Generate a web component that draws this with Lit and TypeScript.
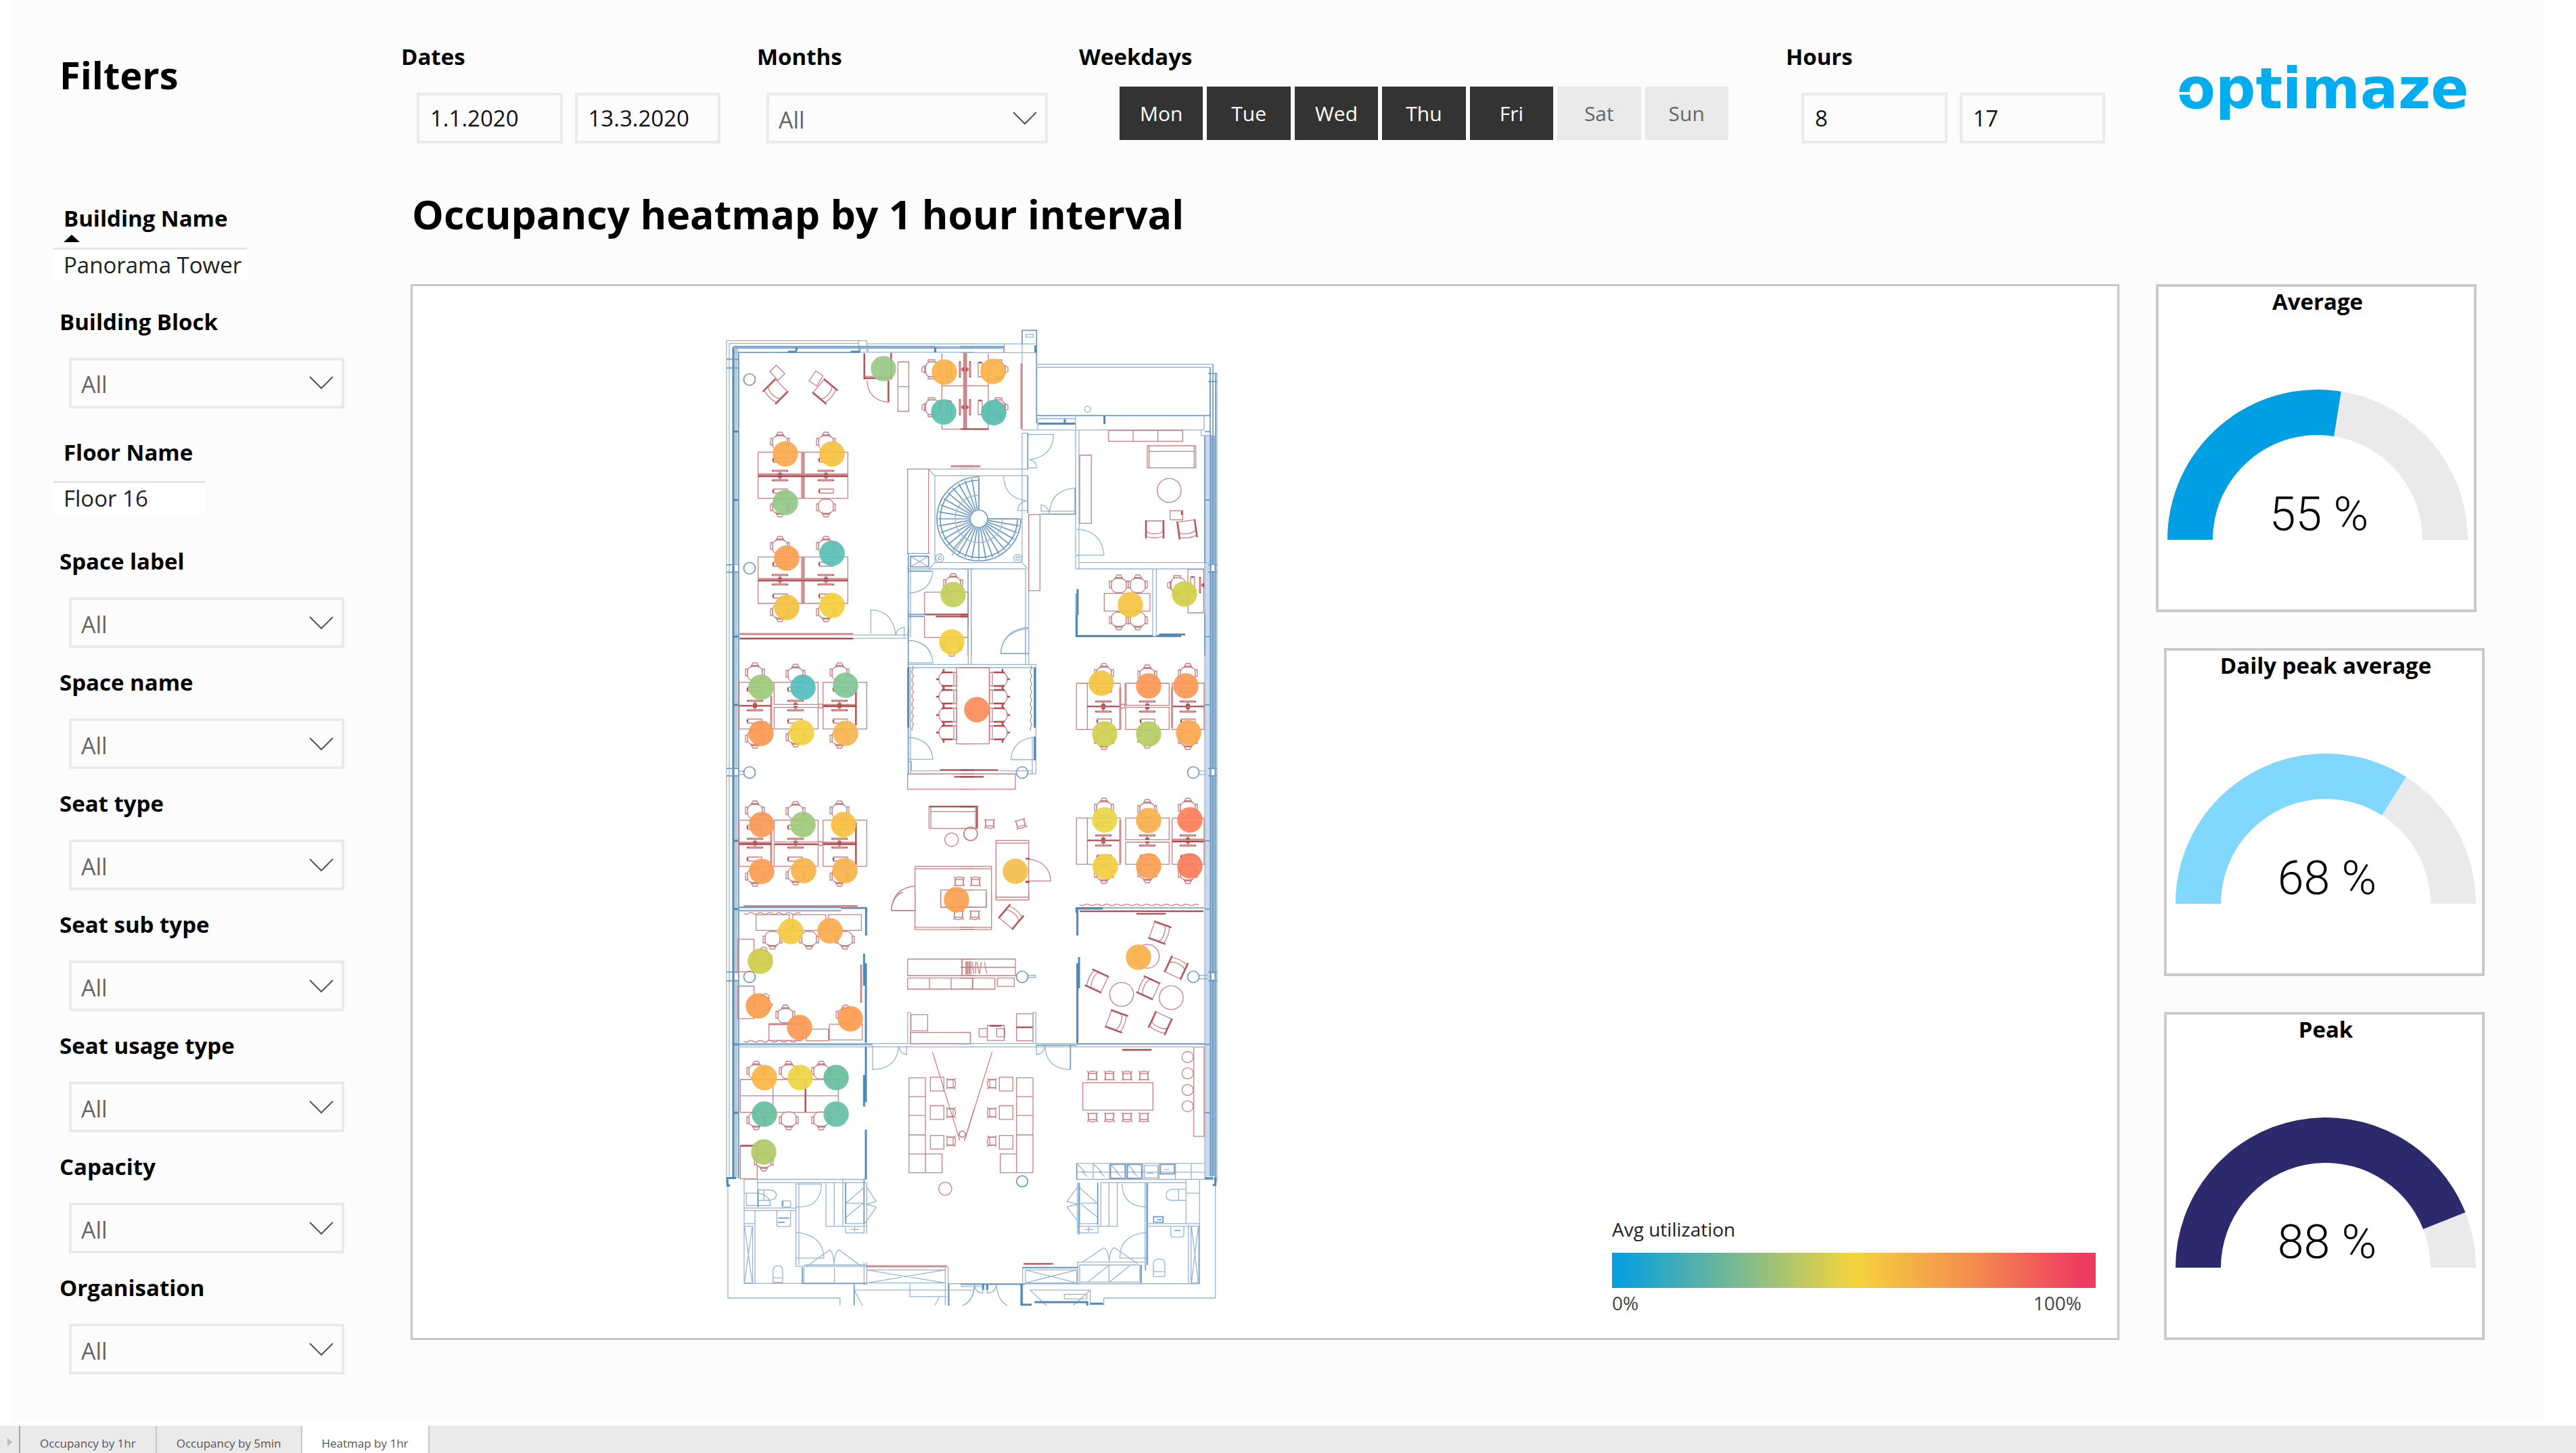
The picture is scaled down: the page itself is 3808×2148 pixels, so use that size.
import { LitElement, html, svg, css } from "lit";
import { customElement, property, state } from "lit/decorators.js";
import { classMap } from "lit/directives/class-map.js";

const sheet = css`
  * {
    box-sizing: border-box;
  }
  :host {
    font-family: "Open Sans", "Noto Sans", sans-serif;
    color: #000;
  }
`;

/* ---------- drop-down filter ---------- */

@customElement("filter-select")
export class FilterSelect extends LitElement {
  @property() label = "";

  static styles = [
    sheet,
    css`
      :host {
        display: block;
      }
      .label {
        display: block;
        font-size: 33px;
        line-height: 48px;
        font-weight: 700;
        margin-bottom: 29px;
      }
      .box {
        display: grid;
        margin-left: 14px;
        align-items: center;
      }
      .control,
      .chevron {
        grid-area: 1 / 1;
      }
      .control {
        appearance: none;
        width: 100%;
        height: 75px;
        border: 4px solid #eaeaea;
        border-radius: 0;
        background: #fcfcfc;
        color: #666;
        font: 400 34px "Open Sans", "Noto Sans", sans-serif;
        padding: 4px 56px 0 14px;
      }
      .chevron {
        justify-self: end;
        margin-right: 16px;
        width: 36px;
        height: 20px;
        pointer-events: none;
        fill: none;
        stroke: #555;
        stroke-width: 2;
      }
    `,
  ];

  render() {
    return html`
      <label class="label" for="field">${this.label}</label>
      <div class="box">
        <select class="control" id="field">
          <option>All</option>
        </select>
        <svg class="chevron" viewBox="0 0 36 20" aria-hidden="true"><path d="M1 1L18 18L35 1" /></svg>
      </div>
    `;
  }
}

/* ---------- gauge card ---------- */

@customElement("gauge-card")
export class GaugeCard extends LitElement {
  @property() label = "";
  @property({ type: Number }) value = 0;
  @property() color = "";

  static styles = [
    sheet,
    css`
      :host {
        display: flex;
        flex-direction: column;
        height: 485px;
        border: 4px solid #c8cacc;
        background: #fff;
        padding: 0 9px 0 13px;
      }
      .title {
        margin: 0 0 108px;
        font-size: 33px;
        line-height: 44px;
        font-weight: 700;
        text-align: center;
      }
      .dial {
        width: 100%;
        display: block;
      }
      .value {
        font-family: Roboto, sans-serif;
        font-weight: 300;
        font-size: 70px;
        text-anchor: middle;
      }
    `,
  ];

  private band(from: number, to: number) {
    const at = (r: number, f: number) => {
      const a = Math.PI * (1 - f);
      return `${(222 + r * Math.cos(a)).toFixed(2)} ${(222 - r * Math.sin(a)).toFixed(2)}`;
    };
    return `M${at(222, from)}A222 222 0 0 1 ${at(222, to)}L${at(155, to)}A155 155 0 0 0 ${at(155, from)}Z`;
  }

  render() {
    const f = this.value / 100;
    return html`
      <h2 class="title">${this.label}</h2>
      <svg class="dial" viewBox="0 0 444 224" role="img" aria-label=${`${this.label} ${this.value} %`}>
        <path d=${this.band(0, 1)} fill="#eaeaea" />
        <path d=${this.band(0, f)} fill=${this.color} />
        <text class="value" x="224" y="208">${this.value} %</text>
      </svg>
    `;
  }
}

/* ---------- floor plan ---------- */

type Spot = [number, number, string];
type Placed = [number, number, number];

const SPOTS: Spot[] = [
  [1306, 546, "#98c987"], [1396, 551, "#fbb248"], [1395, 610, "#5cbfae"],
  [1468, 550, "#fbb248"], [1469, 611, "#57bdae"],
  [1161, 672, "#fbaa4e"], [1230, 672, "#f6c23e"], [1161, 744, "#94c888"],
  [1163, 826, "#fca052"], [1230, 819, "#5abfb8"], [1163, 899, "#f5c240"], [1230, 896, "#f5d040"],
  [1409, 880, "#c3d05c"], [1407, 950, "#f4d040"], [1671, 895, "#f6c642"], [1751, 879, "#d1d048"],
  [1125, 1017, "#9dca7a"], [1187, 1017, "#52bec0"], [1250, 1014, "#80c795"],
  [1125, 1085, "#fb9953"], [1185, 1084, "#f4d140"], [1250, 1085, "#f9b64f"],
  [1126, 1220, "#fb9a54"], [1187, 1220, "#a1c97b"], [1247, 1220, "#f9be42"],
  [1126, 1289, "#fc9e54"], [1188, 1288, "#f9b44b"], [1249, 1288, "#f9b44b"],
  [1414, 1331, "#fba04f"], [1444, 1050, "#fc8c5e"], [1501, 1289, "#f5be48"],
  [1628, 1011, "#f4c542"], [1698, 1015, "#fc9957"], [1753, 1015, "#fc9957"],
  [1633, 1086, "#ced152"], [1698, 1086, "#b7cf66"], [1757, 1084, "#fba84d"],
  [1633, 1213, "#ebd646"], [1698, 1214, "#fab04d"], [1759, 1213, "#fd7f5d"],
  [1634, 1282, "#f3cf40"], [1698, 1281, "#fc9f52"], [1759, 1281, "#fd7b5c"],
  [1169, 1378, "#f5ca41"], [1227, 1377, "#fbaa4f"], [1124, 1422, "#cfcd4c"],
  [1121, 1488, "#fb9e50"], [1182, 1520, "#fc9a54"], [1257, 1507, "#fc9d50"],
  [1130, 1594, "#fbb646"], [1183, 1594, "#edd543"], [1236, 1594, "#68bf9f"],
  [1130, 1648, "#68bfa0"], [1236, 1648, "#68bfa6"], [1129, 1704, "#b0c967"],
  [1683, 1416, "#fbb049"],
];

const CHAIRS: Placed[] = [
  [1153, 655, 0], [1221, 655, 0], [1153, 750, 180], [1221, 750, 180],
  [1153, 809, 0], [1221, 809, 0], [1153, 905, 180], [1221, 905, 180],
  [1378, 547, -90], [1378, 603, -90], [1475, 547, 90], [1475, 603, 90],
  [1409, 864, 0], [1407, 956, 180],
  [1654, 866, 0], [1682, 866, 0], [1654, 917, 180], [1682, 917, 180], [1741, 866, -90],
  [1116, 996, 0], [1176, 998, 0], [1241, 996, 0], [1116, 1092, 180], [1176, 1090, 180], [1241, 1092, 180],
  [1116, 1200, 0], [1176, 1201, 0], [1241, 1200, 0], [1116, 1296, 180], [1176, 1294, 180], [1241, 1296, 180],
  [1632, 997, 0], [1696, 999, 0], [1756, 997, 0], [1632, 1094, 180], [1696, 1092, 180], [1756, 1094, 180],
  [1632, 1196, 0], [1696, 1198, 0], [1756, 1196, 0], [1632, 1292, 180], [1696, 1291, 180], [1756, 1292, 180],
  [1142, 1389, 180], [1196, 1389, 180], [1249, 1389, 180], [1126, 1416, 15], [1127, 1484, 30],
  [1161, 1502, 0], [1250, 1502, 0],
  [1118, 1585, 0], [1166, 1585, 0], [1214, 1585, 0], [1118, 1656, 180], [1166, 1656, 180], [1214, 1656, 180],
  [1129, 1717, 180],
];

const SCREENS: Placed[] = [
  ...[1153, 1221].flatMap((x): Placed[] => [[x, 697, 0], [x, 711, 180], [x, 851, 0], [x, 865, 180]]),
  ...[1116, 1176, 1241].flatMap((x): Placed[] => [[x, 1037, 0], [x, 1051, 180], [x, 1241, 0], [x, 1254, 180]]),
  ...[1631, 1696, 1756].flatMap((x): Placed[] => [[x, 1038, 0], [x, 1053, 180], [x, 1236, 0], [x, 1251, 180]]),
  [1419, 547, -90], [1434, 547, 90], [1419, 603, -90], [1434, 603, 90], [1774, 866, -90],
];

const KEYS: Placed[] = [
  ...[1153, 1221].flatMap((x): Placed[] => [[x, 681, 0], [x, 727, 0], [x, 835, 0], [x, 882, 0]]),
  ...[1115, 1175, 1242].flatMap((x): Placed[] => [[x, 1020, 0], [x, 1067, 0], [x, 1224, 0], [x, 1271, 0]]),
  ...[1632, 1696, 1756].flatMap((x): Placed[] => [[x, 1021, 0], [x, 1067, 0], [x, 1220, 0], [x, 1268, 0]]),
  [1403, 548, 90], [1403, 604, 90], [1449, 547, 90], [1449, 603, 90], [1763, 864, 90],
];

const ARMCHAIRS: Placed[] = [
  [1707, 784, 0], [1755, 784, -8], [1146, 580, 45], [1220, 580, -50],
  [1715, 1380, -70], [1651, 1511, -70], [1621, 1451, 115], [1697, 1461, 115],
  [1739, 1431, 205], [1715, 1514, 25], [1495, 1356, 220],
];

const STOOLS: Placed[] = [
  ...[1615, 1640, 1666, 1691].flatMap((x): Placed[] => [[x, 1591, 180], [x, 1653, 0]]),
  ...[1603, 1646, 1688].flatMap((y): Placed[] => [[1406, y, -90], [1466, y, 90]]),
  [1418, 1304, 180], [1442, 1304, 180], [1417, 1354, 0], [1441, 1354, 0], [1463, 1219, 0], [1509, 1219, -15],
];

const MEETING: Placed[] = [1005, 1031, 1058, 1084].flatMap((y): Placed[] => [[1402, y, 0], [1475, y, 180]]);

const place = ([x, y, r]: Placed) => `translate(${x} ${y}) rotate(${r})`;

const spiral = () => {
  let d = "";
  for (let i = 0; i <= 27; i++) {
    const a = (i * 10 * Math.PI) / 180;
    const c = Math.cos(a);
    const s = Math.sin(a);
    d += `M${(1447 + 14 * c).toFixed(1)} ${(768 + 14 * s).toFixed(1)}L${(1447 + 60 * c).toFixed(1)} ${(768 + 60 * s).toFixed(1)}`;
  }
  return d;
};

const wave = (x: number, y: number, n: number, step: number, vertical: boolean) => {
  let d = `M${x} ${y}`;
  for (let i = 0; i < n; i++) {
    const k = i % 2 ? -6 : 6;
    d += vertical ? `q${k} ${step / 2} 0 ${step}` : `q${step / 2} ${k} ${step} 0`;
  }
  return d;
};

@customElement("floor-plan")
export class FloorPlan extends LitElement {
  static styles = css`
    :host {
      display: block;
    }
    .plan {
      display: block;
      width: 100%;
    }
    .plan path,
    .plan rect,
    .plan circle,
    .plan ellipse {
      vector-effect: non-scaling-stroke;
      fill: none;
    }
    .plan .b {
      stroke: #97b5d3;
      stroke-width: 1.3;
    }
    .plan .m {
      stroke: #6b99c4;
      stroke-width: 1.7;
    }
    .plan .B {
      stroke: #4f88b7;
      stroke-width: 3;
    }
    .plan .r {
      stroke: #c98083;
      stroke-width: 1.3;
    }
    .plan .R {
      stroke: #b2494e;
      stroke-width: 2.4;
    }
    .plan .P {
      stroke: #cf8c8e;
      stroke-width: 3;
    }
    .plan .glass {
      fill: #cbdbeb;
    }
    .plan .steel {
      fill: #95b6d5;
    }
    .plan .white {
      fill: #fff;
    }
    .plan .spot {
      stroke-width: 1.5;
      opacity: 0.92;
    }
  `;

  private northWest() {
    return svg`<g transform="translate(1060 470) scale(.33333)">
      <path class="b" d="M42 104H664V155M54 116H628M628 104V158M664 118H1140M80 155H1140M670 125V155" />
      <path class="steel" d="M72 128H634V140H72ZM634 128H1140V140H634Z" />
      <path class="m" d="M72 130H634V157M96 156H634M634 130H965V157" />
      <path class="B" d="M352 132V150M315 153H352M592 153H632M968 134V155" />
      <g class="red">
        <path class="r" d="M234 240L263 213L300 250L270 280ZM408 282L438 238L470 260L442 305Z" />
        <path class="R" d="M653 160V275M653 270H772M772 158V275M760 280V377" />
        <path class="r" d="M665 280Q670 370 760 377M653 262H772M802 198H850V417H802ZM802 308H850M997 160V496H1140M997 304H1140M1095 160V496M1106 160V496" />
        <path class="P" d="M1100 160V496M1036 661H1140" />
        <path class="r" d="M182 598H580V803H182ZM375 598V803M387 598V803M182 1063H580V1269H182ZM375 1063V1269M387 1063V1269" />
        <path class="P" d="M381 598V803M381 1063V1269M182 697H580M182 1161H580M100 1405H604" />
        <path class="R" d="M182 705H580M182 1168H580M100 1425H604" />
        <path class="r" d="M845 673H938V1048H845ZM920 1219H1112V1316M920 1219V1316M920 1328V1420H1112V1328" />
        <path class="R" d="M920 1318H1112M970 1327H1112" />
      </g>
      <path class="b" d="M938 673H1140M966 703H1140M966 703V1088H1140M940 675L966 703M940 1116L966 1088M845 1116H1140M845 1048H945M858 1060L938 1107M938 1060L858 1107" />
      <path class="m" d="M858 1060H938V1107H858ZM848 1048V1420" />
      <path class="b" d="M848 1126H957Q950 1215 852 1224M858 1116V1420M1112 1116V1500M1127 1116V1500" />
      <path class="m" d="M848 1126H950M848 1318H920M848 1327H920" />
      <path class="b" d="M604 1409H845M604 1424H845M682 1405V1298Q780 1300 793 1412Q795 1380 830 1375V1420M848 1433Q930 1435 950 1500" />
      <circle class="b" cx="987" cy="1068" r="18" /><circle class="b" cx="987" cy="1068" r="7" />
    </g>`;
  }

  private northEast() {
    return svg`<g transform="translate(1420 470) scale(.33333)">
      <path class="steel" d="M0 128H190V140H0Z" />
      <path class="m" d="M0 130H192V157M273 122V58H337V470" />
      <path class="b" d="M0 118H330M0 157H330M194 118V157M273 122V500M290 76H322V88H290ZM337 208H1120M337 222H1107V435M1120 208V250" />
      <path class="m" d="M337 436H1107M1107 222V436" />
      <path class="B" d="M342 472H510M332 125V157M638 438V474M462 452V472" />
      <path class="b" d="M342 450H510V472M342 450V500M510 436V1116M525 502V1116M273 500H1080M1080 436V500M1067 500V525H1120M273 514H300M273 673H300M273 703H300M273 514V1088" />
      <path class="m" d="M298 514V673M298 703V870M508 757V870M355 873H512" />
      <path class="b" d="M300 520H413Q408 620 305 632Q335 635 338 668H300M298 703H190Q195 805 295 814Q255 820 253 857H295M508 757Q400 765 394 868Q385 835 357 832V860H508M0 673H273M0 703H273M0 1088H273L297 1116M82 703V895H273M0 1116H290M288 1116V1500M302 878V1500M34 1116V1500M47 1116V1500" />
      <path class="b" d="M302 1375Q185 1385 178 1490H302M515 940Q625 945 636 1055H515M525 1088H1100M512 1116H1080M852 1116V1412M868 1116V1412M512 1057H525" />
      <circle class="b" cx="253" cy="1070" r="18" /><circle class="b" cx="253" cy="1070" r="8" />
      <circle class="b" cx="563" cy="408" r="13" />
      <path class="m" d="M512 1225V1416H870M1083 1314V1500M1083 527V1088" />
      <path class="B" d="M519 1205V1320M515 1320V1414H852M870 1414H978M880 1407H996" />
      <path class="r" d="M123 160V496H0M0 304H123M14 160V496M26 160V496M656 502H985V550H656ZM765 502V550M875 502V550M528 612H580V914H528ZM302 875H352V1213H302ZM828 570H1043V668H828ZM836 570V668M1036 570V668M836 595H1036M929 858H985V898H929ZM637 1225H840V1303H637ZM1008 1118H1078V1311H1008ZM0 1219H34V1420H0" />
      <circle class="r" cx="925" cy="768" r="53" />
      <path class="P" d="M20 160V496M270 205V496M0 661H88" />
      <path class="R" d="M0 496H123M0 1318H34M0 1327H34M981 860V876" />
    </g>`;
  }

  private west() {
    return svg`<g transform="translate(1060 930) scale(.33333)">
      <path class="b" d="M848 52Q950 60 957 153H848M848 160H1140M848 174H1062M858 174V645M848 483Q950 490 957 580H848M848 590H862V632M862 632H988" />
      <path class="m" d="M848 0V645" />
      <path class="B" d="M848 174V440" />
      <path class="r" d="${wave(867, 165, 16, 18, true)}" />
      <path class="r" d="M98 239H240V446H98ZM253 239H448V337H253ZM253 350H448V446H253ZM470 239H664V446H470ZM240 239H253M240 446H253M448 337L460 343L470 337M98 850H240V1055H98ZM253 850H448V947H253ZM253 958H448V1055H253ZM470 850H664V1055H470Z" />
      <path class="P" d="M240 300V446M240 900V1055M470 340H616M470 950H616M98 950H240" />
      <path class="R" d="M98 343H240M470 345H616M616 260V430M98 957H240M470 957H616M616 860V1050M253 957H448" />
      <circle class="r white" cx="459" cy="344" r="9" /><circle class="r white" cx="459" cy="954" r="9" />
      <path class="r" d="M1062 174H1140M1062 174V512H1140M845 645V713H1140M845 645H1140M940 790H1140M940 790V887H1140M948 790V887M948 812H1140" />
      <path class="R" d="M988 628H1140M1052 658H1140M940 790H1140" />
      <circle class="r" cx="1040" cy="937" r="30" /><circle class="r" cx="1125" cy="911" r="30" />
      <path class="r" d="M878 1055H1140M878 1066H1140M878 1055V1260M772 1252Q780 1150 878 1143M772 1252H878M992 1160H1140M992 1160V1237H1140" />
      <path class="P" d="M120 1232H622" />
      <path class="m" d="M98 1238H664M550 1242H664V1260" />
      <path class="b" d="M98 1250H550" />
    </g>`;
  }

  private east() {
    return svg`<g transform="translate(1420 930) scale(.33333)">
      <path class="b" d="M34 0V160M47 0V160M0 160H334M0 174H330M288 0V160M302 0V160M302 0Q185 10 178 112H302M334 160V645M318 480V645M330 483Q230 490 223 582H330M172 632H318M334 645H300" />
      <path class="B" d="M329 174V440M329 480V585" />
      <path class="r" d="${wave(312, 165, 16, 18, true)}" />
      <path class="r" d="M0 174H127V512H0M0 645H243V713H0M0 790H73V887H0M66 790V887M0 812H66" />
      <path class="R" d="M0 628H167M0 658H103M0 790H73V887" />
      <circle class="r" cx="44" cy="911" r="30" />
      <path class="r" d="M514 243H708V448H514ZM562 243V448M732 243H925V341H732ZM732 350H925V448H732ZM938 243H1080V448H938ZM514 841H708V1046H514ZM562 841V1046M732 841H925V937H732ZM732 948H925V1046H732ZM938 841H1080V1046H938Z" />
      <path class="R" d="M562 346H708M938 346H1080M562 940H708M938 945H1080" />
      <path class="P" d="M708 260V448M732 243V341M938 260V440M708 850V1040M938 937H1080" />
      <circle class="r white" cx="719" cy="345" r="9" />
      <path class="r" d="M157 940H302V1205H157ZM157 952H302M157 1192H302M288 1021Q395 1030 400 1120H288M0 1055H137V1260M0 1066H137M0 1160H114V1237H0" />
      <path class="R" d="M288 1021H306M288 1125H306" />
      <path class="r" d="${wave(528, 1226, 24, 22, false)}" />
      <path class="b" d="M512 1238H1080M1060 632H1083M1060 648H1083" />
      <path class="B" d="M514 1260V1242H632" />
    </g>`;
  }

  private southWest() {
    return svg`<g transform="translate(1060 1320) scale(.33333 .40816)">
      <path class="r" d="${wave(118, 77, 12, 21, false)}" />
      <path class="r" d="${wave(118, 540, 12, 21, false)}" />
      <path class="P" d="M118 51H622M639 262V400M230 478H378" />
      <path class="r" d="M173 81H320V138H173ZM336 81H482V138H336ZM494 81H640V138H494ZM92 170H164V288H92ZM92 340H164V458H92ZM230 478H378V537H230ZM396 496H494V538H396ZM498 478H644V535H498Z" />
      <path class="b" d="M98 68H550M98 548H1140M98 560H1140" />
      <path class="m" d="M98 54H550M550 58H663M72 552H690" />
      <path class="B" d="M661 55V157M652 223V338M660 257V545M660 560V760M652 662V776M660 860V1040" />
      <path class="b" d="M690 556V642Q800 640 805 556Q810 585 840 588V556M845 435V545M858 435V545M845 435H858" />
      <path class="r" d="M103 678H538V797H103ZM103 737H538M248 678V797M392 678V797M103 918H178V1038H103Z" />
      <path class="R" d="M103 918H178M392 680V797" />
      <path class="r" d="M845 242H1140M845 242V302H1140M845 311H1140M845 311V351H1140M942 311V351M1038 311V351M1132 311V351M1087 242V302M1087 272H1140M860 443H934V502H860ZM858 508H1124V549H858Z" />
      <path class="r" d="M1104 250V298M1110 250V298M1118 250V298M1126 250V298" />
      <path class="r" d="M878 0V135H1140M878 127H1140M772 66H878M772 66Q780 10 825 0M992 0V54H1140M955 578L1077 900M1140 785L1097 900" />
      <ellipse class="r" cx="1087" cy="876" rx="14" ry="11" />
      <ellipse class="r" cx="1012" cy="1074" rx="29" ry="24" />
      <path class="r" d="M851 672H924V1016H851ZM851 740H924M851 808H924M851 879H924M851 948H998V1016H924M946 670H1006V720H946ZM946 773H1006V823H946ZM946 881H1006V930H946Z" />
      <path class="b" d="M48 1050V1470H545V1497M120 1040V1417M120 1040H664M180 1052H664M180 1040V1140M120 1144H350M120 1153H350M168 1153V1417M120 1200H168M120 1417H664M120 1210H158V1415H120ZM122 1212L156 1413M156 1212L122 1413M130 1090V1135H238M120 1090H180Q235 1095 238 1137M182 1078H230Q263 1080 263 1096Q263 1115 230 1116H182M208 1078V1116M288 1118H326V1140H288ZM265 1155V1205Q265 1211 275 1211H318Q326 1211 326 1205V1155M350 1055V1355M363 1055V1350M350 1140Q460 1145 463 1057H350M350 1232Q470 1240 474 1325H350M483 1052V1210H558V1052M520 1052V1210M558 1040V1210H664M570 1052V1200H652M652 1052V1237M664 1052V1237M572 1126L648 1072M572 1126H648L572 1177M664 1068L706 1120L664 1130L706 1140L655 1200M570 1210V1234H652M590 1221H630M610 1212V1230M350 1355H664M385 1350H664M385 1360V1417M397 1355L498 1296Q515 1300 519 1347Q522 1300 542 1296L640 1355M521 1360V1413M248 1413V1370Q250 1352 270 1352Q291 1352 291 1370V1413ZM248 1397H291M652 1340V1422M664 1340V1422M664 1368H1015M664 1415H1015M664 1368L1012 1415M1012 1368L664 1415M1012 1360V1497M1025 1355V1497M608 1422V1497M608 1441H1140M855 1418V1465H1020M608 1441L645 1497M1020 1418H1140M965 1497L985 1468M1090 1497Q1135 1480 1140 1430" />
      <path class="m" d="M182 1078V1140M272 1180H320M292 1118V1136M270 1196H300M652 1040V1200M570 1052V1200M378 1358V1417M608 1420V1497M1028 1420V1497M380 1417H664" />
      <path class="B" d="M42 1035H84M46 1036V1062H58" />
      <path class="P" d="M664 1355H1020" />
    </g>`;
  }

  private southEast() {
    return svg`<g transform="translate(1420 1320) scale(.33333 .40816)">
      <path class="r" d="M137 0V135H0M0 127H137M114 0V54H0M157 0V28H302V0M157 18H302" />
      <path class="r" d="M0 242H243V302H0M0 272H243M6 242V302M0 311H152V351H0M54 311V351M163 311H238V341H163ZM25 252V295M32 252V295M40 252V295M52 252L58 295M66 252V295M72 252L82 295M92 252L84 295M106 252L116 295M0 508H43V549H0M82 494H118V524H82ZM119 482H193V537H119ZM160 494H196V524H160ZM248 440H321V538H248ZM248 489H321" />
      <path class="R" d="M130 484H182M248 489H321" />
      <path class="r" d="M140 578L18 898M248 672H321V1016H248ZM248 740H321M248 808H321M248 879H321M248 948H176V1016H248M172 670H232V720H172ZM172 773H232V823H172ZM172 881H232V930H172ZM542 690H853V789H542ZM1034 560H1080V884H1034Z" />
      <ellipse class="r" cx="8" cy="876" rx="13" ry="11" />
      <ellipse class="r" cx="828" cy="232" rx="53" ry="43" />
      <ellipse class="r" cx="714" cy="370" rx="53" ry="43" />
      <ellipse class="r" cx="934" cy="382" rx="53" ry="43" />
      <ellipse class="r" cx="1007" cy="597" rx="25" ry="20" />
      <ellipse class="r" cx="1007" cy="656" rx="25" ry="20" />
      <ellipse class="r" cx="1007" cy="716" rx="25" ry="20" />
      <ellipse class="r" cx="1007" cy="775" rx="25" ry="20" />
      <path class="R" d="M528 69H1077M780 78H910M717 571H847M280 1346H410" />
      <path class="B" d="M518 58V157M518 58H630M525 235V348M518 257V548" />
      <path class="b" d="M630 58H1080M0 548H515M0 560H1080M522 548H1080M334 435V548M321 435V548M321 435H334M337 556V588Q370 585 374 556Q378 640 487 642" />
      <path class="m" d="M334 554H515M487 556V642M515 550H1083" />
      <path class="b" d="M515 982H1083M515 1040H1130M620 1052H1000M515 1014H1083M588 982V1040M660 982V1040M735 982V1040M808 982V1040M880 982V1040M953 982V1040M1023 982V1040M518 985L550 1012H540L562 1030M590 985L625 1012H615L638 1030M665 985L695 1012H688L712 1030M740 985L770 1012H762L785 1030M815 990H875V1034H815ZM828 1018H855M905 1004H925M1130 1050V1470H635V1497M1060 1040V1417M1000 1040V1200M1000 1090H1060M830 1200H1060M830 1210H1060M818 1052V1350M830 1052V1350M518 1052V1237M528 1052V1200H608V1052M528 1070L605 1126H528M535 1130L608 1177M518 1068L472 1120L518 1130L472 1140L518 1190M518 1210H695V1052M622 1052V1210M658 1052V1210M528 1234H610V1210M550 1221H588M568 1212V1230M716 1057Q720 1140 828 1140M828 1232Q705 1240 706 1325H828M998 1076H935Q912 1080 912 1097Q912 1115 935 1116H998M967 1076V1116M932 1212V1240Q932 1249 942 1249H980Q990 1249 990 1240V1212M855 1392V1345Q858 1328 880 1328Q905 1328 906 1345V1392ZM855 1374H906M1010 1205V1417M1022 1210H1056V1415H1022ZM1024 1212L1054 1413M1054 1212L1024 1413M275 1358H520M288 1368H515V1415H288ZM288 1368L515 1415M515 1368L288 1415M515 1340H820M528 1350H795M528 1350V1412H795V1350M658 1350V1412M565 1412L655 1353M660 1412L750 1353M540 1340L635 1288Q655 1295 659 1337Q662 1295 682 1287L785 1345M520 1340V1422M802 1350V1417M0 1418H1060M0 1428H100M275 1358V1497M308 1441H575V1497M460 1456H560V1473H460ZM308 1441L380 1497M575 1441L500 1497M62 1422Q65 1450 98 1452V1422M118 1422V1452Q155 1450 158 1422Q165 1480 208 1497M62 1422Q60 1480 8 1497" />
      <path class="m" d="M515 982V1040M665 986H730V1036H665ZM740 986H803V1036H740ZM886 986H948V1020H886ZM856 1175H898V1195H856ZM872 1186H892M525 1052V1240M608 1052V1205M826 1052V1350M800 1350V1417M948 1225H975M820 1350V1370M275 1360H520M0 1420H285" />
      <path class="B" d="M1130 1030V1060H1118M1083 1036H1120M270 1420V1494H315M328 1485H562V1497M575 1490H632M100 1420V1440M118 1420V1440" />
      <ellipse class="m" cx="273" cy="1047" rx="25" ry="20" />
    </g>`;
  }

  private facade() {
    const ticksL = [532, 545, 836, 847, 1137, 1148, 1438, 1451];
    const ticksR = [553, 565, 836, 847, 1137, 1148, 1438, 1451];
    const mull = [639, 740, 942, 1043, 1244, 1345, 1545, 1646];
    return svg`
      <path class="glass" d="M1084 514H1092V1743H1084ZM1781 645H1788V1740H1781Z" />
      <path class="steel" d="M1789 645H1796V1740H1789Z" />
      <path class="b" d="M1074 505V1748M1078 508V1740M1088 516V1743M1799 553V1748M1781 645V1743" />
      <path class="m" d="M1793 540V1740M1789 560V1740M1092 522V1743M1797 553V1740" />
      <path class="B" d="M1084 514V1743" />
      ${ticksL.map((y) => svg`<path class="m" d="M1074 ${y}H1092" />`)}
      ${ticksR.map((y) => svg`<path class="m" d="M1786 ${y}H1799" />`)}
      ${mull.map((y) => svg`<path class="B" d="M1085 ${y}H1091" /><path class="m" d="M1781 ${y}H1789" />`)}
      ${[841, 1143, 1445].map((y) => svg`<rect class="white" x="1086" y="${y - 5}" width="5" height="9" /><rect class="white" x="1791" y="${y - 5}" width="4" height="9" />`)}
      <path class="b" d="M1093 1141H1100M1093 1146H1100M1773 1443H1785M1773 1448H1785M1519 1443H1531V1446H1519" />
      ${[[1108, 562], [1108, 841], [1108, 1143], [1108, 1445], [1764, 1143], [1764, 1445], [1511, 1143], [1511, 1445]].map(
        ([x, y]) => svg`<circle class="m white" cx="${x}" cy="${y}" r="8.500" />`,
      )}
    `;
  }

  private furniture() {
    return svg`
      ${KEYS.map((k) => svg`<g transform=${place(k)}><rect class="r" x="-10" y="-3" width="21" height="6" /><path class="R" d="M-10 -2V2" /></g>`)}
      ${SCREENS.map((s) => svg`<g transform=${place(s)}><path class="R" d="M-12 0H12" /><path class="P" d="M-10 0H10M0 0V5" /><path class="R" d="M-3 5H3" /></g>`)}
      ${CHAIRS.map(
        (c) => svg`<g transform=${place(c)}>
          <rect class="r white" x="-11" y="-10" width="22" height="21" rx="8" />
          <path class="r white" d="M-14 -6H-11V4H-14ZM11 -6H14V4H11Z" />
          <path class="r" d="M-8 -8Q0 -13 8 -8M-6 -11H6" />
          <path class="r" d="M-5 -11L-3 -15H3L5 -11Z" />
        </g>`,
      )}
      ${ARMCHAIRS.map(
        (c) => svg`<g transform=${place(c)}>
          <path class="R" d="M-13 -14V13M13 -14V13" />
          <path class="r" d="M-13 -13H13M-12 -12V2Q-10 6 0 6Q10 6 12 2V-12M-13 10Q0 14 13 10" />
        </g>`,
      )}
      ${STOOLS.map(
        (c) => svg`<g transform=${place(c)}>
          <path class="r" d="M-6 -6H6V5Q0 8 -6 5ZM-8 -7L-6 -5M8 -7L6 -5M-8 7L-6 4M8 7L6 4M-6 3H6" />
          <path class="r" d="M-6 -5V5M6 -5V5" />
        </g>`,
      )}
      ${MEETING.map(
        (c) => svg`<g transform=${place(c)}>
          <path class="r" d="M8 -10H-6Q-14 -9 -14 0Q-14 9 -6 10H8ZM8 -10H12V10H8Z" />
          <path class="R" d="M-7 -15V-10M-7 15V10M-10 -10H6M-10 10H6M-18 0H-14" />
        </g>`,
      )}
    `;
  }

  render() {
    return html`
      <svg class="plan" viewBox="1060 480 760 1460" role="img" aria-label="Floor 16">
        ${this.facade()} ${this.northWest()} ${this.northEast()} ${this.west()} ${this.east()}
        ${this.southWest()} ${this.southEast()} ${this.furniture()}
        ${svg`
          <path class="m" d=${spiral()} />
          <path class="m" d="M1509 768A62 62 0 1 1 1447 706M1504 768A57 57 0 1 1 1447 711" />
          <path class="b" d="M1482 768A35 35 0 1 1 1447 733M1430 790L1407 822" />
          <circle class="m white" cx="1447" cy="768" r="13" />
        `}
        ${SPOTS.map(([x, y, c]) => svg`<circle class="spot" cx=${x} cy=${y} r="18" style=${`fill:${c};stroke:${c}`} />`)}
      </svg>
    `;
  }
}

/* ---------- page ---------- */

@customElement("app-root")
export class AppRoot extends LitElement {
  @state() private days = new Set(["Mon", "Tue", "Wed", "Thu", "Fri"]);
  @state() private page = "Heatmap by 1hr";

  static styles = [
    sheet,
    css`
      :host {
        display: block;
      }
      .page {
        min-height: 100vh;
        display: flex;
        flex-direction: column;
        background: #fff;
      }
      .canvas {
        flex: 1;
        margin: 0 47px 6px 19px;
        background: #fcfcfc;
        display: grid;
        grid-template-columns: 574px minmax(0, 1fr);
      }
      .sidebar {
        padding: 70px 84px 66px 69px;
      }
      .heading {
        margin: 0 0 149px;
        font-size: 56px;
        line-height: 80px;
        font-weight: 700;
      }
      .names {
        display: table;
        margin-left: -10px;
        border-collapse: collapse;
        font-size: 33px;
      }
      .building {
        width: 287px;
        margin-bottom: 37px;
      }
      .floor {
        width: 226px;
        margin: 41px 0 46px -10px;
      }
      .names th {
        height: 68px;
        padding: 0 0 0 16px;
        vertical-align: top;
        text-align: left;
        line-height: 48px;
        font-weight: 700;
        white-space: nowrap;
      }
      .names td {
        padding: 0 0 0 16px;
        background: #fff;
        border-top: 3px solid #e6e6e6;
        line-height: 46px;
        color: #222;
        white-space: nowrap;
      }
      .sort {
        display: block;
        width: 24px;
        height: 11px;
      }
      .filters {
        display: grid;
        gap: 27px;
      }
      .content {
        display: flex;
        flex-direction: column;
      }
      .topbar {
        padding-top: 60px;
        display: grid;
        grid-template-columns: 526fr 476fr 1045fr 578fr 543fr;
      }
      .group {
        border: 0;
        margin: 0;
        padding: 0;
        min-width: 0;
      }
      .caption {
        display: block;
        padding: 0;
        font-size: 33px;
        line-height: 48px;
        font-weight: 700;
      }
      .pair {
        display: flex;
        gap: 18px;
        margin: 29px 54px 0 23px;
      }
      .hours .pair {
        margin-right: 106px;
      }
      .box {
        flex: 1;
        min-width: 0;
        height: 75px;
        border: 4px solid #eaeaea;
        border-radius: 0;
        background: #fcfcfc;
        padding: 0 16px;
        color: #111;
        font: 400 33px "Open Sans", "Noto Sans", sans-serif;
      }
      .months {
        margin-right: 46px;
      }
      .days {
        display: flex;
        gap: 6px;
        margin: 20px 85px 0 60px;
      }
      .day {
        flex: 1;
        height: 79px;
        border: 0;
        padding: 0;
        background: #eaeaea;
        color: #666;
        font: 400 30px "Open Sans", "Noto Sans", sans-serif;
      }
      .day.on {
        background: #333;
        color: #fff;
      }
      .logo {
        position: relative;
        justify-self: start;
        align-self: start;
        margin-top: 12px;
        font-family: "DejaVu Sans", sans-serif;
        font-weight: 700;
        font-size: 83px;
        line-height: 120px;
        color: #00adef;
        text-decoration: none;
      }
      .logo::before {
        content: "";
        position: absolute;
        left: 0;
        top: 64px;
        width: 24px;
        height: 4px;
        background: #fcfcfc;
      }
      .title {
        margin: 64px 0 64px 16px;
        font-size: 59px;
        line-height: 80px;
        font-weight: 700;
      }
      .board {
        display: flex;
        align-items: stretch;
        gap: 54px;
        margin: 0 88px 0 14px;
      }
      .panel {
        flex: 1;
        min-width: 0;
        display: flex;
        justify-content: space-between;
        align-items: flex-start;
        border: 3px solid #c6c6c6;
        background: #fff;
        padding: 56px 32px 32px 450px;
      }
      .map {
        flex: 0 1 760px;
      }
      .legend {
        align-self: flex-end;
        width: 715px;
        color: #444;
        font-size: 28px;
        line-height: 40px;
      }
      .legend-title {
        margin: 0 0 15px;
        color: #222;
      }
      .scale {
        height: 52px;
        background: linear-gradient(90deg, #019ee3, #7aba92 26%, #f4d43e 50%, #f48b4f 75%, #ee3c60 97%);
      }
      .ends {
        display: flex;
        justify-content: space-between;
        padding-right: 21px;
        margin-top: 2px;
      }
      .gauges {
        width: 486px;
        display: flex;
        flex-direction: column;
        gap: 53px;
      }
      .gauge {
        margin-left: 12px;
      }
      .gauge:first-child {
        margin: 0 12px 0 0;
      }
      .tabs {
        height: 40px;
        display: flex;
        background: #eaeaea;
      }
      .next {
        width: 30px;
        border: 0;
        border-right: 2px solid #a8a8a8;
        background: none;
        padding: 8px 0 0 4px;
      }
      .next svg {
        display: block;
        width: 7px;
        height: 12px;
        margin-left: 7px;
      }
      .tab {
        border: 0;
        border-right: 2px solid #c8c8c8;
        background: none;
        padding: 10px 29px 0;
        color: #555;
        font: 400 17px "Open Sans", "Noto Sans", sans-serif;
      }
      .tab.on {
        background: #fff;
      }
    `,
  ];

  private toggle(day: string) {
    const next = new Set(this.days);
    if (!next.delete(day)) next.add(day);
    this.days = next;
  }

  render() {
    return html`
      <div class="page">
        <div class="canvas">
          <aside class="sidebar">
            <h2 class="heading">Filters</h2>
            <table class="names building">
              <tr>
                <th scope="col" aria-sort="ascending">
                  Building Name
                  <svg class="sort" viewBox="0 0 24 11" aria-hidden="true"><path d="M12 0L24 11H0Z" /></svg>
                </th>
              </tr>
              <tr><td>Panorama Tower</td></tr>
            </table>
            <filter-select label="Building Block"></filter-select>
            <table class="names floor">
              <tr><th scope="col">Floor Name</th></tr>
              <tr><td>Floor 16</td></tr>
            </table>
            <div class="filters">
              ${["Space label", "Space name", "Seat type", "Seat sub type", "Seat usage type", "Capacity", "Organisation"].map(
                (l) => html`<filter-select label=${l}></filter-select>`,
              )}
            </div>
          </aside>
          <main class="content">
            <header class="topbar">
              <fieldset class="group">
                <legend class="caption">Dates</legend>
                <div class="pair">
                  <input class="box" aria-label="Start date" value="1.1.2020" />
                  <input class="box" aria-label="End date" value="13.3.2020" />
                </div>
              </fieldset>
              <filter-select class="months" label="Months"></filter-select>
              <fieldset class="group">
                <legend class="caption">Weekdays</legend>
                <div class="days">
                  ${["Mon", "Tue", "Wed", "Thu", "Fri", "Sat", "Sun"].map(
                    (d) => html`<button
                      class=${classMap({ day: true, on: this.days.has(d) })}
                      aria-pressed=${this.days.has(d)}
                      @click=${() => this.toggle(d)}
                    >${d}</button>`,
                  )}
                </div>
              </fieldset>
              <fieldset class="group hours">
                <legend class="caption">Hours</legend>
                <div class="pair">
                  <input class="box" aria-label="From hour" value="8" />
                  <input class="box" aria-label="To hour" value="17" />
                </div>
              </fieldset>
              <a class="logo" href="#">optimaze</a>
            </header>
            <h1 class="title">Occupancy heatmap by 1 hour interval</h1>
            <div class="board">
              <section class="panel">
                <floor-plan class="map"></floor-plan>
                <div class="legend">
                  <p class="legend-title">Avg utilization</p>
                  <div class="scale"></div>
                  <div class="ends"><span>0%</span><span>100%</span></div>
                </div>
              </section>
              <div class="gauges">
                <gauge-card class="gauge" label="Average" .value=${55} color="#009fe3"></gauge-card>
                <gauge-card class="gauge" label="Daily peak average" .value=${68} color="#80d8ff"></gauge-card>
                <gauge-card class="gauge" label="Peak" .value=${88} color="#2d296d"></gauge-card>
              </div>
            </div>
          </main>
        </div>
        <nav class="tabs">
          <button class="next" aria-label="Next pages">
            <svg viewBox="0 0 7 12" aria-hidden="true"><path d="M0 0L7 6L0 12Z" fill="#bbb" /></svg>
          </button>
          ${["Occupancy by 1hr", "Occupancy by 5min", "Heatmap by 1hr"].map(
            (t) => html`<button
              class=${classMap({ tab: true, on: this.page === t })}
              @click=${() => (this.page = t)}
            >${t}</button>`,
          )}
        </nav>
      </div>
    `;
  }
}
